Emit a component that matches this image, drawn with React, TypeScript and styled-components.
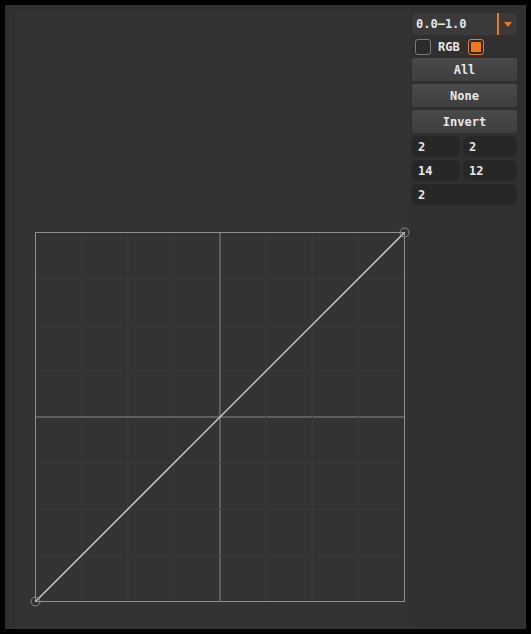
import styled, { createGlobalStyle } from 'styled-components';

const GlobalStyle = createGlobalStyle`
  html, body {
    margin: 0;
    background: #000;
    font-family: "DejaVu Sans Mono", monospace;
  }
`;

function Curve() {
  const x0 = 20;
  const y0 = 219;
  const size = 369;
  const step = size / 8;
  const lines = [];
  for (let i = 1; i < 8; i++) {
    const major = i === 4;
    const p = i * step;
    lines.push(
      <line key={ 'v' + i } x1={ x0 + p } y1={ y0 } x2={ x0 + p } y2={ y0 + size }
        stroke={ major ? '#8a8a8a' : '#3c3c3c' } strokeWidth={ 1 } />,
      <line key={ 'h' + i } x1={ x0 } y1={ y0 + p } x2={ x0 + size } y2={ y0 + p }
        stroke={ major ? '#8a8a8a' : '#3c3c3c' } strokeWidth={ 1 } />,
    );
  }
  return (
    <svg width="395" height="616" viewBox="0 0 395 616">
      <g transform="translate(0.5 0.5)">
        { lines }
        <rect x={ x0 } y={ y0 } width={ size } height={ size } fill="none" stroke="#8e8e8e" strokeWidth={ 1 } />
        <line x1={ x0 } y1={ y0 + size } x2={ x0 + size } y2={ y0 } stroke="#c8c8c8" strokeWidth={ 1.5 } />
        <circle cx={ x0 } cy={ y0 + size } r={ 4.5 } fill="none" stroke="#8a8a78" strokeWidth={ 1 } />
        <circle cx={ x0 + size } cy={ y0 } r={ 4.5 } fill="none" stroke="#8a8a78" strokeWidth={ 1 } />
      </g>
    </svg>
  );
}

function App() {
  return (
    <>
      <GlobalStyle />
      <Frame>
        <Canvas>
          <Curve />
        </Canvas>
        <Side>
          <Select>
            <span>0.0–1.0</span>
            <Arrow>
              <svg width="8" height="5" viewBox="0 0 8 5">
                <path d="M0 0 H8 L4 5 Z" fill="#f07a1a" />
              </svg>
            </Arrow>
          </Select>
          <CheckRow>
            <Box />
            <Label>RGB</Label>
            <Box checked />
          </CheckRow>
          <Button>All</Button>
          <Button>None</Button>
          <Button>Invert</Button>
          <Fields>
            <Field>2</Field>
            <Field>2</Field>
            <Field>14</Field>
            <Field>12</Field>
            <Field wide>2</Field>
          </Fields>
        </Side>
      </Frame>
    </>
  );
}

const Frame = styled.div`
  margin: 5px;
  width: 521px;
  height: 624px;
  background: #303030;
  display: flex;
  align-items: flex-start;
  box-sizing: border-box;
  padding: 8px 0 0 10px;
`;

const Canvas = styled.div`
  width: 395px;
  height: 616px;
  background: #333333;
  flex-shrink: 0;

  svg {
    display: block;
  }
`;

const Side = styled.div`
  width: 105px;
  margin-left: 2px;
  display: flex;
  flex-direction: column;
  gap: 3px;
`;

const Select = styled.div`
  height: 22px;
  border-radius: 5px;
  background: #3a3a3a;
  display: flex;
  align-items: center;
  color: #e6e6e6;
  font-size: 12px;
  font-weight: bold;

  span {
    flex: 1;
    padding-left: 4px;
  }
`;

const Arrow = styled.div`
  width: 20px;
  height: 22px;
  border-left: 2px solid #f07a1a;
  display: flex;
  align-items: center;
  justify-content: center;
  box-sizing: border-box;
`;

const CheckRow = styled.div`
  height: 17px;
  display: flex;
  align-items: center;
  padding-left: 3px;
`;

const Box = styled.div<{ checked?: boolean }>`
  width: 16px;
  height: 16px;
  box-sizing: border-box;
  border-radius: 3px;
  border: 1px solid ${ ({ checked }) => (checked ? '#f07a1a' : '#7a7a7a') };
  background: #2c2c2c;
  display: flex;
  align-items: center;
  justify-content: center;

  &::after {
    content: '';
    display: ${ ({ checked }) => (checked ? 'block' : 'none') };
    width: 10px;
    height: 10px;
    background: #f07a1a;
  }
`;

const Label = styled.span`
  color: #e6e6e6;
  font-size: 12px;
  font-weight: bold;
  margin: 0 8px 0 7px;
`;

const Button = styled.div`
  height: 23px;
  border-radius: 2px;
  background: linear-gradient(#4a4a4a, #3e3e3e);
  color: #e8e8e8;
  font-size: 12px;
  font-weight: bold;
  display: flex;
  align-items: center;
  justify-content: center;
`;

const Fields = styled.div`
  display: grid;
  grid-template-columns: 48px 54px;
  gap: 3px;
`;

const Field = styled.div<{ wide?: boolean }>`
  grid-column: ${ ({ wide }) => (wide ? '1 / 3' : 'auto') };
  height: 21px;
  border-radius: 6px;
  background: #272727;
  color: #e8e8e8;
  font-size: 12px;
  font-weight: bold;
  display: flex;
  align-items: center;
  padding-left: 6px;
`;

export default App;
